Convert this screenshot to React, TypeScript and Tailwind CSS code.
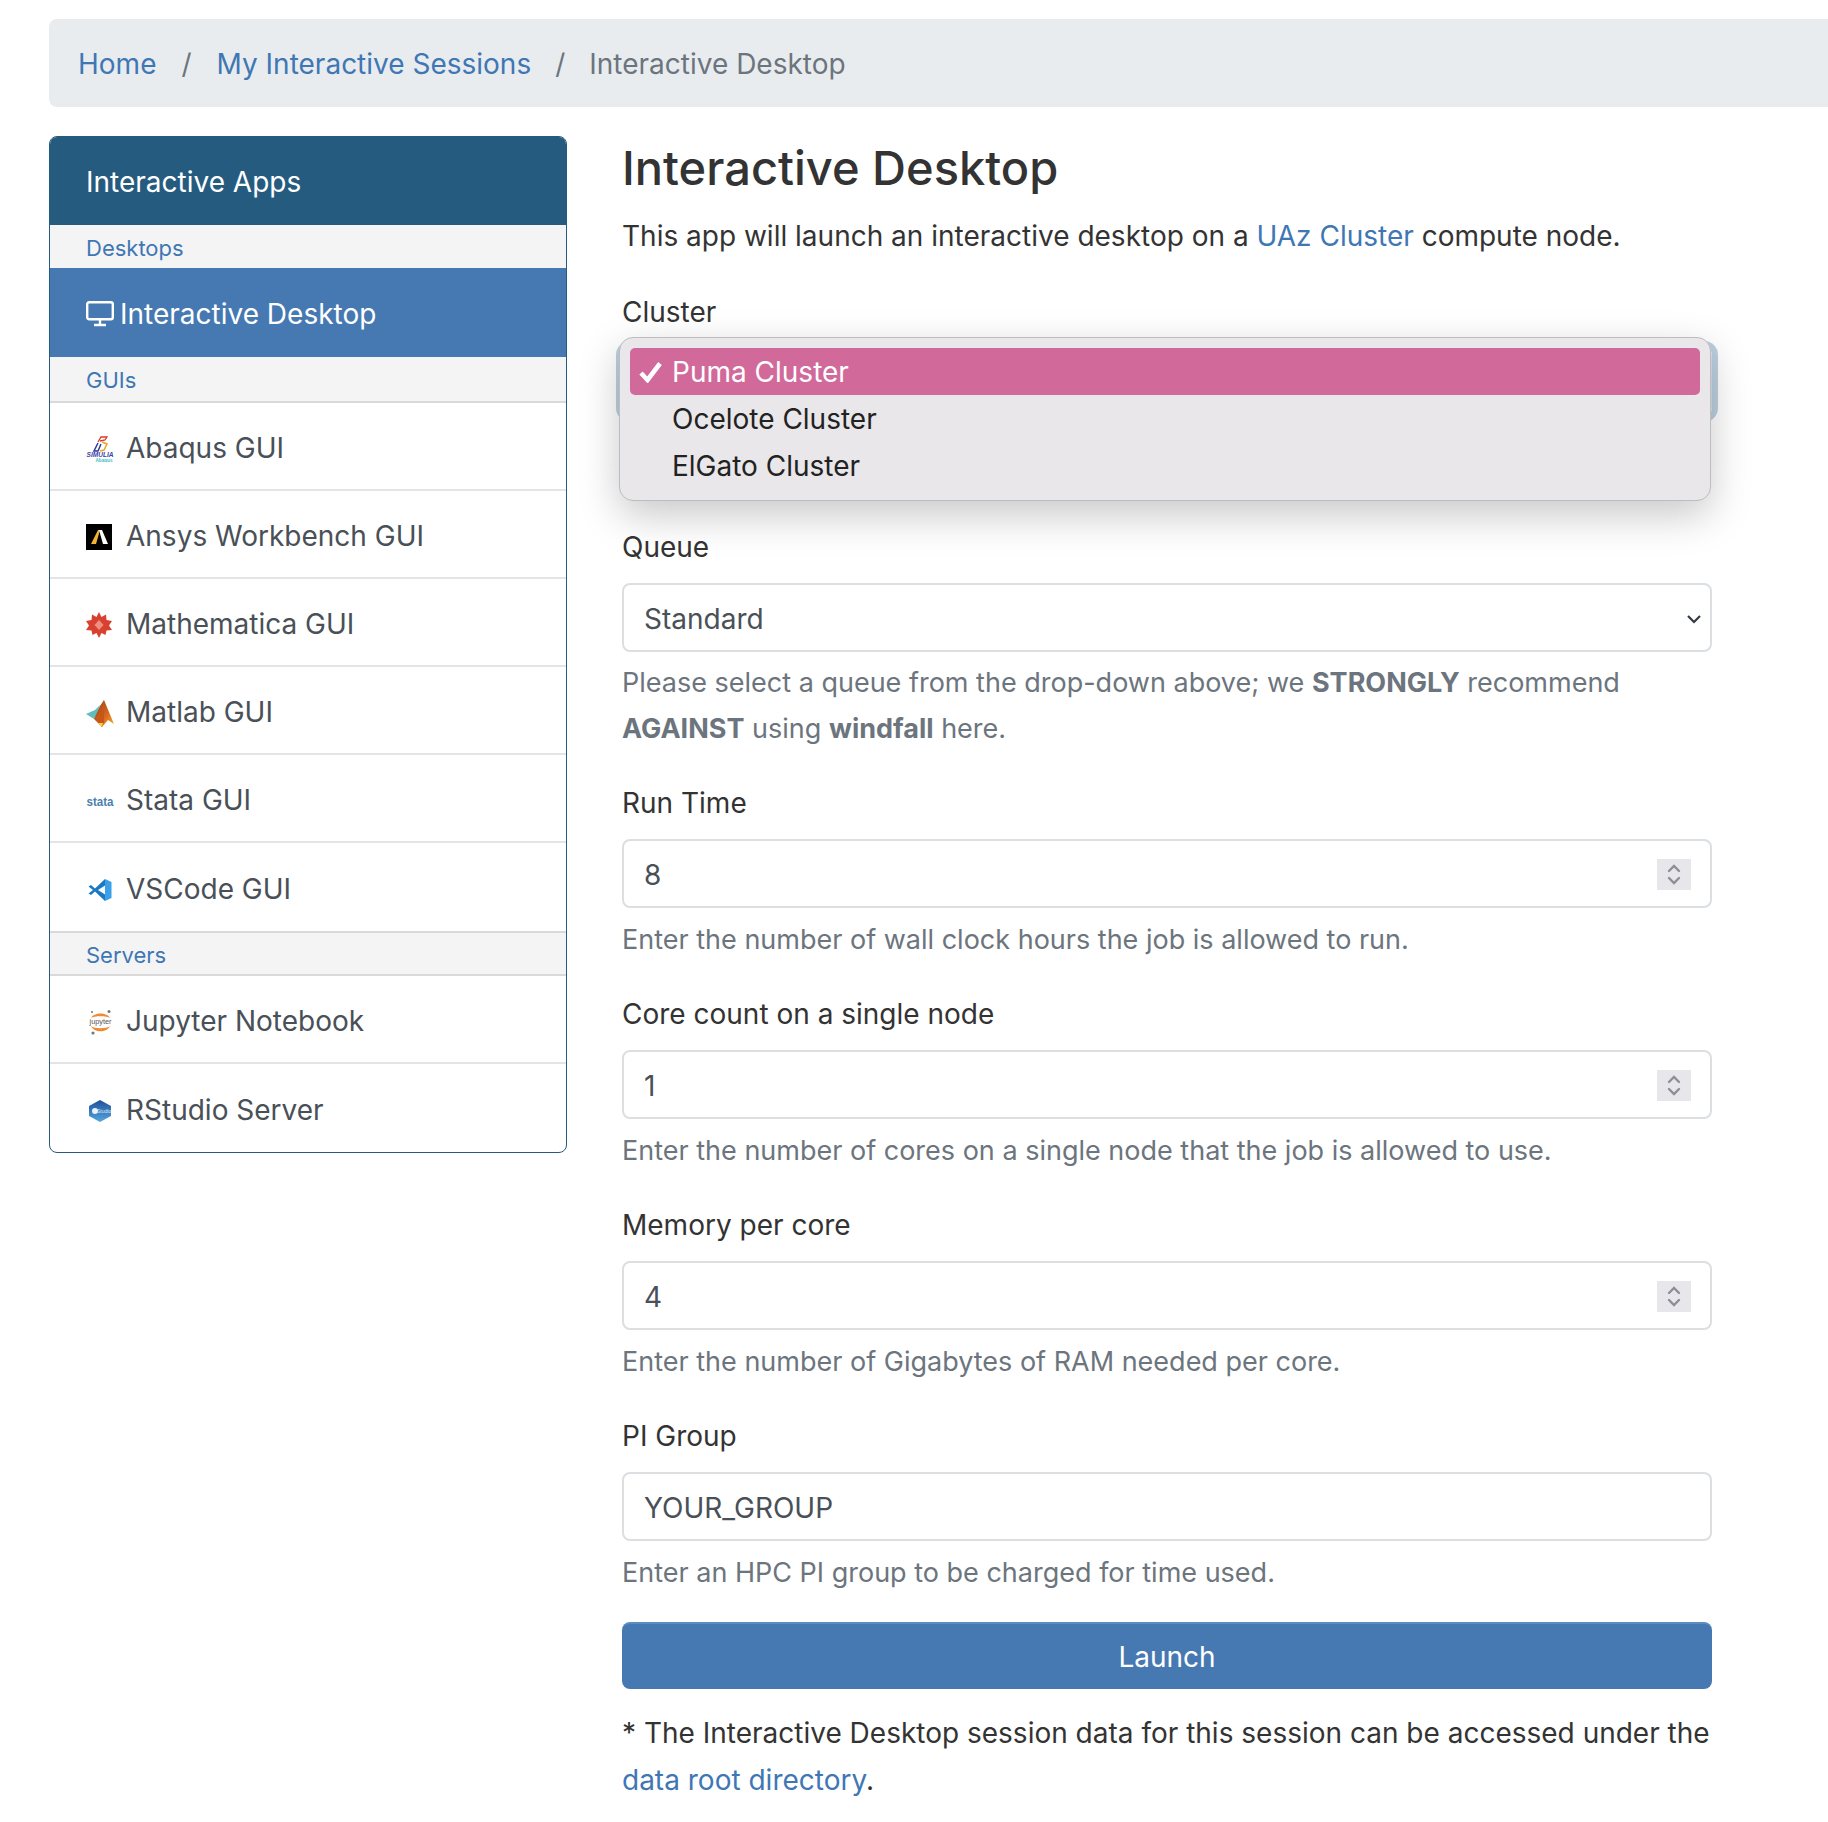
import { ReactNode } from "react"

function AbaqusIcon() {
  return (
    <svg width="28" height="26" viewBox="0 0 28 26">
      <path d="M12 6 L15 1 L21 1 L19 4 L14 5" fill="none" stroke="#d8392b" strokeWidth="1.3" />
      <path d="M12 7 L8 15 L12 15 L15 8" fill="none" stroke="#2f3a9c" strokeWidth="1.5" />
      <path d="M16 6 L21 8 L18 14 L14 15" fill="none" stroke="#e7a52b" strokeWidth="1.5" />
      <text x="14" y="21" textAnchor="middle" fontSize="6.5" fontWeight="700" fontStyle="italic" fill="#3a3fa5" fontFamily="Liberation Sans" textLength="27" lengthAdjust="spacingAndGlyphs">SIMULIA</text>
      <text x="18" y="25.5" textAnchor="middle" fontSize="5" fontWeight="700" fill="#3fc0c8" fontFamily="Liberation Sans" textLength="17" lengthAdjust="spacingAndGlyphs">Abaqus</text>
    </svg>
  )
}

function AnsysIcon() {
  return (
    <svg width="26" height="26" viewBox="0 0 26 26">
      <rect width="26" height="26" fill="#000" />
      <path d="M5 20 L12 6 L14 6 L10 20 Z" fill="#f5b335" />
      <path d="M13 6 L16 6 L22 20 L17 20 Z" fill="#fff" />
    </svg>
  )
}

function MathematicaIcon() {
  return (
    <svg width="26" height="26" viewBox="0 0 26 26">
      <path d="M13 0 L15.5 5 L20 2.5 L20.5 8 L26 9 L23 13.5 L26 18 L20.5 18.5 L19.5 23 L15.5 21 L13 26 L10.5 21 L6.5 23 L5.5 18.5 L0 18 L3 13.5 L0 9 L5.5 8 L6 2.5 L10.5 5 Z" fill="#d8412f" />
      <path d="M13 8 L17.5 13 L13 18 L8.5 13 Z" fill="#ee9080" />
    </svg>
  )
}

function MatlabIcon() {
  return (
    <svg width="28" height="27" viewBox="0 0 28 27">
      <defs>
        <linearGradient id="mlb" x1="0" y1="0" x2="1" y2="1">
          <stop offset="0" stopColor="#8c3a14" />
          <stop offset="0.6" stopColor="#d9691f" />
          <stop offset="1" stopColor="#f6b23c" />
        </linearGradient>
      </defs>
      <path d="M0 14 L9 10 L14 5 L11 14 L8 19 Z" fill="#5fbdbb" />
      <path d="M14 6 L18 0 L28 24 L22 20 L16 27 L8 19 Z" fill="url(#mlb)" />
      <path d="M18 0 L15 13 L11 20 L16 27 L18 22 Z" fill="#c8561a" />
      <path d="M12 23 L16 27 L17 23 Z" fill="#f7d040" />
    </svg>
  )
}

function StataIcon() {
  return (
    <svg width="28" height="26" viewBox="0 0 28 26">
      <text x="14" y="18" textAnchor="middle" fontSize="12" fontWeight="700" fill="#4a7fae" fontFamily="Liberation Sans" textLength="27" lengthAdjust="spacingAndGlyphs">stata</text>
    </svg>
  )
}

function VSCodeIcon() {
  return (
    <svg className="ml-[2px]" width="24" height="24" viewBox="0 0 24 24">
      <path d="M17 1 L7 10.5 L3 7 L0.5 8.5 L5 12 L0.5 15.5 L3 17 L7 13.5 L17 23 Z" fill="#1b78c4" />
      <path d="M17 1 L23.5 4 L23.5 20 L17 23 Z" fill="#3ba0ea" />
      <path d="M17 7.5 L10 12 L17 16.5 Z" fill="#fff" />
    </svg>
  )
}

function JupyterIcon() {
  return (
    <svg className="ml-[2px]" width="25" height="26" viewBox="0 0 25 26">
      <path d="M3 9 C6 3 19 3 22 9 C19 6.5 6 6.5 3 9 Z" fill="#ef8a32" />
      <path d="M3 17 C6 24 19 24 22 17 C19 20 6 20 3 17 Z" fill="#ef8a32" />
      <circle cx="21" cy="2.5" r="1.5" fill="#777" />
      <circle cx="4" cy="3" r="1" fill="#777" />
      <circle cx="5" cy="24" r="1.6" fill="#777" />
      <text x="12.5" y="15" textAnchor="middle" fontSize="7" fill="#555" fontFamily="Liberation Sans" textLength="22" lengthAdjust="spacingAndGlyphs">jupyter</text>
    </svg>
  )
}

function RStudioIcon() {
  return (
    <svg className="ml-[2px]" width="24" height="24" viewBox="0 0 24 24">
      <defs>
        <linearGradient id="rsb" x1="0" y1="0" x2="0" y2="1">
          <stop offset="0" stopColor="#1f4f9a" />
          <stop offset="1" stopColor="#55a7df" />
        </linearGradient>
      </defs>
      <path d="M12 1 L23 7 L23 17 L12 23 L1 17 L1 7 Z" fill="url(#rsb)" />
      <circle cx="7" cy="12" r="3" fill="#e8f3fb" />
      <text x="16" y="14" textAnchor="middle" fontSize="5" fill="#dcecf8" fontFamily="Liberation Sans">Studio</text>
    </svg>
  )
}

function SectionHeader({ children, className }: { children: ReactNode; className: string }) {
  return (
    <div className={`flex items-center pt-[2px] pl-9 bg-[#f4f4f4] text-[#3f77b4] text-[22px] ${className}`}>
      {children}
    </div>
  )
}

function AppItem({ icon, label, last }: { icon: ReactNode; label: string; last?: boolean }) {
  return (
    <div className={`flex h-[88px] items-center pt-[3px] pl-9 text-[#495057] ${last ? "" : "border-b-2 border-[#e4e4e4]"}`}>
      <span className="mt-[3px] flex w-[40px] shrink-0 items-center">{icon}</span>
      {label}
    </div>
  )
}

function Sidebar() {
  return (
    <aside className="w-[518px] shrink-0 self-start overflow-hidden rounded-lg border border-[#255b7f] bg-white">
      <div className="flex h-[88px] items-center bg-[#255b7f] pt-[2px] pl-9 text-white">Interactive Apps</div>
      <SectionHeader className="h-[43px]">Desktops</SectionHeader>
      <div className="flex h-[89px] items-center gap-[6px] bg-[#4679b2] pt-[2px] pl-9 text-white">
        <svg width="28" height="26" viewBox="0 0 28 26" fill="none" stroke="#fff" strokeWidth="2.4">
          <rect x="1.2" y="1.2" width="25.6" height="17" rx="2" />
          <path d="M14 18 V23 M8 24 H20" />
        </svg>
        Interactive Desktop
      </div>
      <SectionHeader className="h-[46px] border-b-2 border-[#d9d9d9]">GUIs</SectionHeader>
      <AppItem icon={<AbaqusIcon />} label="Abaqus GUI" />
      <AppItem icon={<AnsysIcon />} label="Ansys Workbench GUI" />
      <AppItem icon={<MathematicaIcon />} label="Mathematica GUI" />
      <AppItem icon={<MatlabIcon />} label="Matlab GUI" />
      <AppItem icon={<StataIcon />} label="Stata GUI" />
      <AppItem icon={<VSCodeIcon />} label="VSCode GUI" last />
      <SectionHeader className="h-[45px] border-y-2 border-[#d9d9d9]">Servers</SectionHeader>
      <AppItem icon={<JupyterIcon />} label="Jupyter Notebook" />
      <AppItem icon={<RStudioIcon />} label="RStudio Server" last />
    </aside>
  )
}

function Spinner() {
  return (
    <span className="flex h-[31px] w-[34px] items-center justify-center bg-[#e6e6eb]">
      <svg width="14" height="25" viewBox="0 0 14 25" fill="none" stroke="#8e8e98" strokeWidth="2.4" strokeLinecap="round">
        <path d="M2 9 L7 4 L12 9 M2 16 L7 21 L12 16" />
      </svg>
    </span>
  )
}

function Field({ label, value, help, spinner }: { label: string; value: string; help: string; spinner?: boolean }) {
  return (
    <div className="mb-[27px]">
      <div className="mb-[14px] h-[46px] pt-[1px]">{label}</div>
      <div className="flex h-[69px] items-center justify-between rounded-lg border-2 border-[#dcdfe2] pt-[2px] pl-[20px] pr-[19px] text-[#495057]">
        {value}
        {spinner && <Spinner />}
      </div>
      <div className="mt-[9px] text-[27px] text-[#6c757d]">{help}</div>
    </div>
  )
}

export default function App() {
  return (
    <div className="h-[1822px] overflow-hidden bg-white pt-[19px] pl-[49px] text-[28px] leading-[46px] text-[#333] [font-family:Inter,'Liberation_Sans',sans-serif]">
      <nav className="flex h-[88px] items-center gap-[25px] rounded-l-lg bg-[#e9ecef] pt-[2px] pl-[29px]">
        <a className="text-[#3f77b4]">Home</a>
        <span className="text-[#6c757d]">/</span>
        <a className="text-[#3f77b4]">My Interactive Sessions</a>
        <span className="-ml-[1px] text-[#6c757d]">/</span>
        <span className="-ml-[1px] text-[#6c757d]">Interactive Desktop</span>
      </nav>

      <div className="mt-[29px] flex">
        <Sidebar />
        <main className="ml-[55px] w-[1090px]">
          <h1 className="h-[66px] text-[47px] leading-[64px] font-medium">Interactive Desktop</h1>
          <p className="mt-[11px]">
            This app will launch an interactive desktop on a <a className="text-[#3f77b4]">UAz Cluster</a> compute node.
          </p>

          <div className="mt-[29px] mb-[108px]">
            <div className="mb-[13px] h-[46px] pt-[1px]">Cluster</div>
            <div className="relative h-[69px] rounded-lg border-2 border-[#dcdfe2] shadow-[0_0_0_6px_#bdd0e0]">
              <div className="absolute top-[-12px] -left-[5px] z-10 h-[164px] w-[1092px] rounded-[14px] border border-[#bdbcbf] bg-[#e9e7ea] px-[10px] pt-[10px] text-[#222] shadow-[0_14px_40px_rgba(0,0,0,0.22)]">
                <div className="flex h-[47px] items-center rounded-[5px] bg-[#d1699a] text-white">
                  <svg className="mx-[9px] shrink-0" width="24" height="22" viewBox="0 0 24 22" fill="none" stroke="#fff" strokeWidth="4.6">
                    <path d="M2 12 L8.5 19 L21 2.5" />
                  </svg>
                  Puma Cluster
                </div>
                <div className="flex h-[47px] items-center pl-[42px]">Ocelote Cluster</div>
                <div className="flex h-[47px] items-center pl-[42px]">ElGato Cluster</div>
              </div>
            </div>
          </div>

          <div className="mb-[27px]">
            <div className="mb-[13px] h-[46px]">Queue</div>
            <div className="flex h-[69px] items-center justify-between rounded-lg border-2 border-[#dcdfe2] pt-[2px] pl-[20px] pr-[8px] text-[#495057]">
              Standard
              <svg width="16" height="10" viewBox="0 0 16 10" fill="none" stroke="#343a40" strokeWidth="2.2">
                <path d="M2 2 L8 8 L14 2" />
              </svg>
            </div>
            <div className="mt-[8px] text-[27px] text-[#6c757d]">
              Please select a queue from the drop-down above; we <b>STRONGLY</b> recommend <b>AGAINST</b> using <b>windfall</b> here.
            </div>
          </div>

          <Field label="Run Time" value="8" help="Enter the number of wall clock hours the job is allowed to run." spinner />
          <Field label="Core count on a single node" value="1" help="Enter the number of cores on a single node that the job is allowed to use." spinner />
          <Field label="Memory per core" value="4" help="Enter the number of Gigabytes of RAM needed per core." spinner />
          <Field label="PI Group" value="YOUR_GROUP" help="Enter an HPC PI group to be charged for time used." />

          <button className="-mt-[1px] h-[67px] w-full rounded-lg border-t-2 border-[#5b8bbf] bg-[#4679b2] text-white">Launch</button>
          <p className="mt-[21px] leading-[47px]">
            * The Interactive Desktop session data for this session can be accessed under the <a className="text-[#3f77b4]">data root directory</a>.
          </p>
        </main>
      </div>
    </div>
  )
}
